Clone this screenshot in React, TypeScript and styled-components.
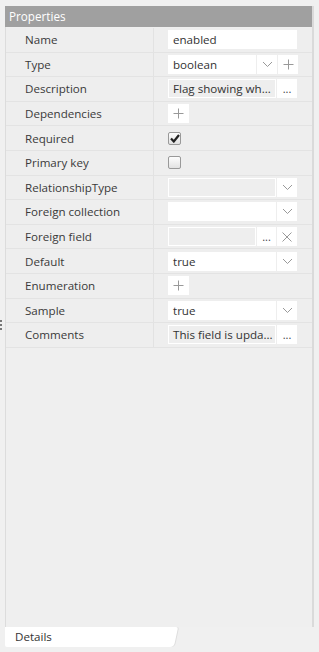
import React from 'react'
import styled, { createGlobalStyle } from 'styled-components'

const GlobalStyle = createGlobalStyle`
  html, body {
    margin: 0;
    padding: 0;
    background: #f0f0f0;
    font-family: 'Open Sans', 'Noto Sans', sans-serif;
    color: #333;
  }
`

const Page = styled.div`
  width: 319px;
  height: 652px;
  display: flex;
  flex-direction: column;
  padding: 6px 5px 5px 5px;
  box-sizing: border-box;
  position: relative;
`

const Panel = styled.div`
  flex: 1;
  display: flex;
  flex-direction: column;
  border-left: 1px solid #dcdcdc;
  border-right: 2px solid #dadada;
  background: #efefef;
`

const Header = styled.div`
  height: 21px;
  background: #a0a0a0;
  color: #fff;
  font-size: 11.7px;
  line-height: 20px;
  padding-left: 4px;
  margin-left: -1px;
  margin-bottom: 1px;
`

const Row = styled.div`
  display: grid;
  grid-template-columns: 148px 1fr;
  height: 24.6px;
  box-sizing: border-box;
  border-bottom: 1px solid #e3e3e3;
  background: #eeeeee;
`

const Label = styled.div`
  display: flex;
  align-items: center;
  padding-left: 19px;
  font-size: 11.6px;
  color: #3a3a3a;
  border-right: 1px solid #e2e2e2;
`

const Value = styled.div`
  display: flex;
  align-items: center;
  padding-left: 14px;
  gap: 1px;
`

const Field = styled.div<{ $w?: number; $grey?: boolean }>`
  width: ${(p) => p.$w ?? 129}px;
  height: 19px;
  box-sizing: border-box;
  background: ${(p) => (p.$grey ? '#eeeeee' : '#ffffff')};
  border: 1px solid #fff;
  display: flex;
  align-items: center;
  padding-left: 4px;
  font-size: 11.6px;
  color: #333;
  white-space: nowrap;
  overflow: hidden;
`

const Btn = styled.div<{ $w?: number }>`
  width: ${(p) => p.$w ?? 20}px;
  height: 19px;
  background: #fff;
  display: flex;
  align-items: center;
  justify-content: center;
  font-size: 11px;
  color: #444;
  flex-shrink: 0;
`

const Check = styled.div`
  width: 11px;
  height: 11px;
  border: 1px solid #999;
  border-radius: 2px;
  background: linear-gradient(#fdfdfd, #e2e2e2);
  display: flex;
  align-items: center;
  justify-content: center;
`

const Handle = styled.div`
  position: absolute;
  left: 0;
  top: 320px;
  display: flex;
  flex-direction: column;
  gap: 2px;

  span {
    width: 2px;
    height: 2px;
    background: #777;
  }
`

const TabBar = styled.div`
  height: 20px;
  display: flex;
`

const Tab = styled.div`
  position: relative;
  width: 157px;
  height: 20px;
  background: #fff;
  font-size: 11.6px;
  line-height: 20px;
  padding-left: 10px;
  color: #333;
  border-radius: 0 0 0 2px;

  &::after {
    content: '';
    position: absolute;
    right: -4px;
    top: 0;
    width: 10px;
    height: 20px;
    background: #fff;
    transform: skewX(-12deg);
    border-radius: 0 2px 4px 0;
    box-shadow: 1px 0 0 #dedede;
  }
`

const Chevron = () => (
  <svg width="11" height="7" viewBox="0 0 11 7">
    <path d="M1 1 L5.5 5.5 L10 1" fill="none" stroke="#999" strokeWidth="1" />
  </svg>
)

const Plus = () => (
  <svg width="11" height="11" viewBox="0 0 11 11">
    <path d="M5.5 0.5 V10.5 M0.5 5.5 H10.5" fill="none" stroke="#999" strokeWidth="1" />
  </svg>
)

const Cross = () => (
  <svg width="10" height="10" viewBox="0 0 10 10">
    <path d="M0.5 0.5 L9.5 9.5 M9.5 0.5 L0.5 9.5" fill="none" stroke="#999" strokeWidth="1" />
  </svg>
)

const Tick = () => (
  <svg width="10" height="9" viewBox="0 0 10 9">
    <path d="M1 4.5 L3.8 7.5 L9 1" fill="none" stroke="#222" strokeWidth="2.2" />
  </svg>
)

const Select: React.FC<{ text?: string; grey?: boolean; w?: number }> = ({ text, grey, w = 129 }) => (
  <>
    <Field $w={w - 21} $grey={grey}>{text}</Field>
    <Btn>
      <Chevron />
    </Btn>
  </>
)

const App: React.FC = () => {
  return (
    <>
      <GlobalStyle />
      <Page>
        <Panel>
          <Header>Properties</Header>

          <Row>
            <Label>Name</Label>
            <Value>
              <Field>enabled</Field>
            </Value>
          </Row>

          <Row>
            <Label>Type</Label>
            <Value>
              <Field $w={88}>boolean</Field>
              <Btn>
                <Chevron />
              </Btn>
              <Btn>
                <Plus />
              </Btn>
            </Value>
          </Row>

          <Row>
            <Label>Description</Label>
            <Value>
              <Field $w={108} $grey>Flag showing wh...</Field>
              <Btn>...</Btn>
            </Value>
          </Row>

          <Row>
            <Label>Dependencies</Label>
            <Value>
              <Btn $w={21}>
                <Plus />
              </Btn>
            </Value>
          </Row>

          <Row>
            <Label>Required</Label>
            <Value>
              <Check>
                <Tick />
              </Check>
            </Value>
          </Row>

          <Row>
            <Label>Primary key</Label>
            <Value>
              <Check />
            </Value>
          </Row>

          <Row>
            <Label>RelationshipType</Label>
            <Value>
              <Select grey />
            </Value>
          </Row>

          <Row>
            <Label>Foreign collection</Label>
            <Value>
              <Select />
            </Value>
          </Row>

          <Row>
            <Label>Foreign field</Label>
            <Value>
              <Field $w={88} $grey />
              <Btn $w={19}>...</Btn>
              <Btn>
                <Cross />
              </Btn>
            </Value>
          </Row>

          <Row>
            <Label>Default</Label>
            <Value>
              <Select text="true" />
            </Value>
          </Row>

          <Row>
            <Label>Enumeration</Label>
            <Value>
              <Btn $w={21}>
                <Plus />
              </Btn>
            </Value>
          </Row>

          <Row>
            <Label>Sample</Label>
            <Value>
              <Select text="true" />
            </Value>
          </Row>

          <Row>
            <Label>Comments</Label>
            <Value>
              <Field $w={108} $grey>This field is upda...</Field>
              <Btn>...</Btn>
            </Value>
          </Row>
        </Panel>

        <TabBar>
          <Tab>Details</Tab>
        </TabBar>

        <Handle>
          <span />
          <span />
          <span />
        </Handle>
      </Page>
    </>
  )
}

export default App
